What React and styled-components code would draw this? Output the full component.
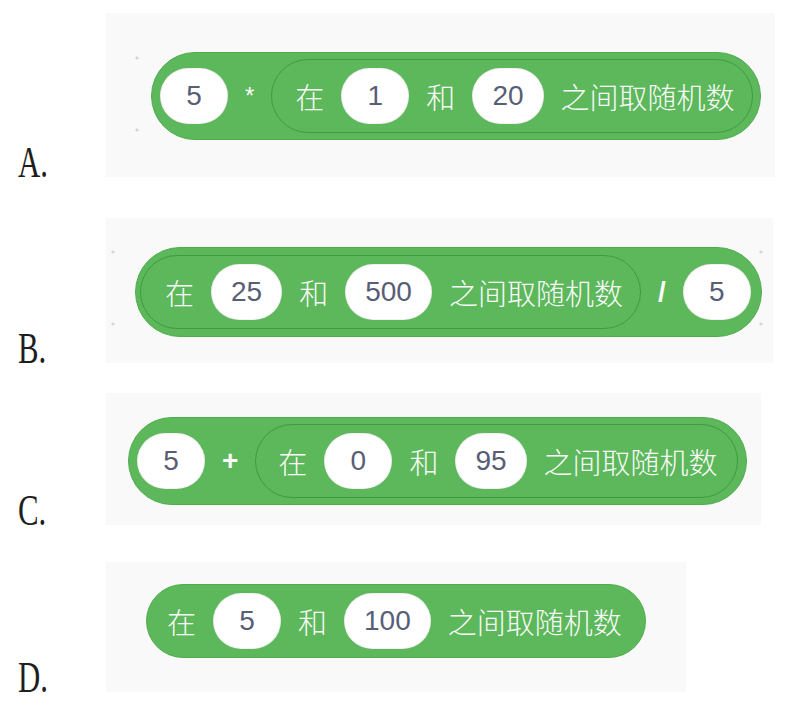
import React from 'react';
import styled, { createGlobalStyle } from 'styled-components';

const Global = createGlobalStyle`
  html, body { margin: 0; padding: 0; background: #ffffff; }
  body { width: 788px; height: 716px; overflow: hidden; font-family: "Liberation Sans", Arial, sans-serif; }
`;

const Page = styled.div`
  display: flex;
  flex-direction: column;
  box-sizing: border-box;
  width: 788px;
  height: 716px;
  padding-top: 13px;
`;

const Row = styled.div`
  display: flex;
  align-items: flex-end;
  margin-top: ${(p) => p.$mt}px;
`;

const Letter = styled.div`
  width: 106px;
  box-sizing: border-box;
  padding-left: 18px;
  margin-bottom: -8px;
  font-family: "Liberation Serif", "DejaVu Serif", serif;
  font-size: 44px;
  line-height: 1;
  color: #1e1e1e;
`;

const LetterGlyph = styled.span`
  display: inline-block;
  transform: scaleX(0.7);
  transform-origin: left bottom;
`;

const Panel = styled.div`
  display: flex;
  align-items: flex-start;
  box-sizing: border-box;
  width: ${(p) => p.$w}px;
  height: ${(p) => p.$h}px;
  padding: ${(p) => p.$top}px 0 0 ${(p) => p.$left}px;
  background-color: #f9f9f9;
  background-image: ${(p) =>
    p.$dots ? 'radial-gradient(circle, #d6d6d6 0 1.2px, transparent 1.9px)' : 'none'};
  background-size: 72px 72px;
  background-position: ${(p) => p.$dots || '0 0'};
`;

const Reporter = styled.div`
  display: inline-flex;
  align-items: center;
  gap: 17px;
  flex-shrink: 0;
  box-sizing: border-box;
  height: ${(p) => p.$h}px;
  padding: 0 ${(p) => p.$pr}px 0 ${(p) => p.$pl}px;
  background: #5cb85b;
  border: ${(p) => (p.$nested ? '1.5px solid #419a3f' : '1px solid #50ad4f')};
  border-radius: 999px;
`;

const Field = styled.div`
  display: flex;
  align-items: center;
  justify-content: center;
  box-sizing: border-box;
  height: 56px;
  min-width: 68px;
  padding: 0 19px;
  border-radius: 28px;
  background: #ffffff;
  border: 1px solid rgba(0, 0, 0, 0.06);
  color: #575e75;
  font-family: "Liberation Sans", Arial, sans-serif;
  font-size: 28px;
  line-height: 1;
`;

const Word = styled.span`
  color: #fafafa;
  font-family: "Noto Sans CJK SC", "Noto Sans", sans-serif;
  font-size: 29px;
  font-weight: 300;
  line-height: 1;
  white-space: nowrap;
`;

const Op = styled.span`
  color: #fafafa;
  font-family: "Liberation Sans", Arial, sans-serif;
  font-size: ${(p) => (p.$small ? 24 : 28)}px;
  font-weight: ${(p) => (p.$bold ? 700 : 400)};
  line-height: 1;
`;

function Random({ a, b, nested, h, pl, pr }) {
  return (
    <Reporter $nested={nested} $h={h} $pl={pl} $pr={pr}>
      <Word>在</Word>
      <Field>{a}</Field>
      <Word>和</Word>
      <Field>{b}</Field>
      <Word>之间取随机数</Word>
    </Reporter>
  );
}

export default function App() {
  return (
    <>
      <Global />
      <Page>
        <Row $mt={0}>
          <Letter><LetterGlyph>A.</LetterGlyph></Letter>
          <Panel $w={669} $h={164} $top={39} $left={45} $dots="-5px 9px">
            <Reporter $h={88} $pl={8} $pr={7}>
              <Field>5</Field>
              <Op $small>*</Op>
              <Random a="1" b="20" nested h={74} pl={23} pr={17} />
            </Reporter>
          </Panel>
        </Row>
        <Row $mt={41}>
          <Letter><LetterGlyph>B.</LetterGlyph></Letter>
          <Panel $w={667} $h={145} $top={29} $left={29} $dots="-29px -2px">
            <Reporter $h={90} $pl={4} $pr={10}>
              <Random a="25" b="500" nested h={74} pl={24} pr={17} />
              <Op $bold>/</Op>
              <Field>5</Field>
            </Reporter>
          </Panel>
        </Row>
        <Row $mt={30}>
          <Letter><LetterGlyph>C.</LetterGlyph></Letter>
          <Panel $w={655} $h={132} $top={24} $left={22}>
            <Reporter $h={88} $pl={8} $pr={8}>
              <Field>5</Field>
              <Op $bold>+</Op>
              <Random a="0" b="95" nested h={74} pl={22} pr={19} />
            </Reporter>
          </Panel>
        </Row>
        <Row $mt={37}>
          <Letter><LetterGlyph>D.</LetterGlyph></Letter>
          <Panel $w={580} $h={130} $top={22} $left={40}>
            <Random a="5" b="100" h={74} pl={20} pr={23} />
          </Panel>
        </Row>
      </Page>
    </>
  );
}
